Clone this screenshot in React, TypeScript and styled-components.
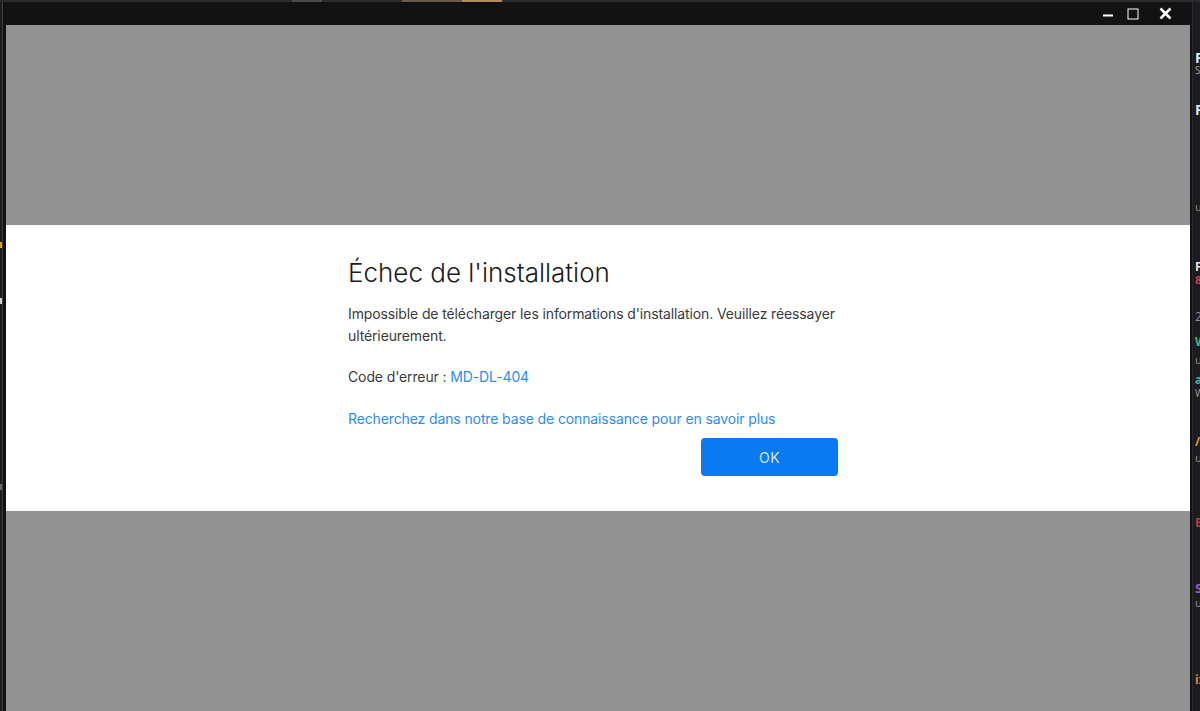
import styled, { createGlobalStyle } from "styled-components";

const GlobalStyle = createGlobalStyle`
  html, body {
    margin: 0;
    padding: 0;
    background: #1b1b1e;
    overflow: hidden;
  }
  * {
    box-sizing: border-box;
  }
`;

const Desktop = styled.div`
  width: 1200px;
  height: 711px;
  display: flex;
  flex-direction: column;
  background: #1b1b1e;
  font-family: Inter, "Noto Sans", sans-serif;
  overflow: hidden;
`;

const TopStrip = styled.div`
  height: 2px;
  flex: none;
  display: flex;
  background: #2b2b30;
`;

const StripBit = styled.div<{ $left: number; $width: number; $color: string }>`
  margin-left: ${(p) => p.$left}px;
  width: ${(p) => p.$width}px;
  background: ${(p) => p.$color};
`;

const Row = styled.div`
  flex: 1;
  display: flex;
  min-height: 0;
`;

const BehindLeft = styled.div`
  width: 2px;
  flex: none;
  display: flex;
  flex-direction: column;
  background: #1c1c1f;
`;

const Mark = styled.div<{ $top: number; $color: string; $h?: number }>`
  margin-top: ${(p) => p.$top}px;
  height: ${(p) => p.$h ?? 8}px;
  background: ${(p) => p.$color};
`;

const Window = styled.div`
  width: 1191px;
  flex: none;
  display: flex;
  flex-direction: column;
  background: #121212;
  border-left: 1px solid #3c3c40;
  border-right: 1px solid #2a2a2e;
  padding: 0 2px 0 3px;
`;

const TitleBar = styled.div`
  height: 23px;
  flex: none;
  display: flex;
  align-items: center;
  justify-content: flex-end;
  padding-right: 9px;
`;

const WinButton = styled.button<{ $width: number; $after?: number }>`
  width: ${(p) => p.$width}px;
  margin-right: ${(p) => p.$after ?? 0}px;
  height: 23px;
  border: 0;
  padding: 0;
  background: transparent;
  display: flex;
  align-items: center;
  justify-content: center;
  color: #ffffff;
`;

const Content = styled.div`
  flex: 1;
  display: flex;
  flex-direction: column;
  background: #919191;
`;

const Backdrop = styled.div`
  height: 200px;
  flex: none;
`;

const Band = styled.div`
  background: #ffffff;
  height: 286px;
  flex: none;
  padding: 30px 0 0 342px;
`;

const Column = styled.div`
  width: 490px;
  display: flex;
  flex-direction: column;
`;

const Title = styled.h1`
  margin: 0;
  font-size: 26px;
  line-height: 36px;
  font-weight: 300;
  color: #1a1a1a;
  letter-spacing: 0px;
`;

const Text = styled.p<{ $gap: number }>`
  margin: ${(p) => p.$gap}px -6px 0 0;
  font-size: 14px;
  line-height: 22px;
  color: #3a3a3a;
  letter-spacing: -0.12px;
`;

const Link = styled.a`
  color: #2c8cf4;
  text-decoration: none;
  cursor: pointer;
`;

const Actions = styled.div`
  margin-top: 8px;
  display: flex;
  justify-content: flex-end;
`;

const OkButton = styled.button`
  width: 137px;
  height: 38px;
  border: 0;
  border-radius: 4px;
  background: #0a7af3;
  color: #d4e6ff;
  font-family: Inter, "Noto Sans", sans-serif;
  font-size: 14px;
  font-weight: 400;
  letter-spacing: 0.5px;
  cursor: pointer;
`;

const BehindRight = styled.div`
  flex: 1;
  overflow: hidden;
  display: flex;
  flex-direction: column;
  padding-left: 2px;
  background: #1c1c20;
`;

const Snip = styled.div<{ $top: number; $color: string; $size?: number; $bold?: boolean }>`
  margin-top: ${(p) => p.$top}px;
  height: 12px;
  color: ${(p) => p.$color};
  font-size: ${(p) => p.$size ?? 12}px;
  font-weight: ${(p) => (p.$bold ? 700 : 400)};
  line-height: 12px;
  white-space: nowrap;
  font-family: "Noto Sans", sans-serif;
`;

const snippets = [
  { top: 50, text: "F", color: "#e8e8e8", size: 14, bold: true },
  { top: 0, text: "Se", color: "#9a9a9a", size: 10 },
  { top: 28, text: "F", color: "#e8e8e8", size: 14, bold: true },
  { top: 85, text: "u", color: "#8a8a8a", size: 11 },
  { top: 48, text: "F", color: "#e8e8e8", size: 12, bold: true },
  { top: 1, text: "8", color: "#d9364a", size: 11, bold: true },
  { top: 25, text: "2", color: "#8a8a8a", size: 12 },
  { top: 13, text: "W", color: "#21c08a", size: 12, bold: true },
  { top: 6, text: "u", color: "#8a8a8a", size: 11 },
  { top: 8, text: "a", color: "#24c0a0", size: 12, bold: true },
  { top: 1, text: "W", color: "#9a9a9a", size: 10 },
  { top: 37, text: "/\\", color: "#e89a2a", size: 12, bold: true },
  { top: 4, text: "u", color: "#8a8a8a", size: 11 },
  { top: 53, text: "E", color: "#c0392b", size: 12, bold: true },
  { top: 53, text: "S", color: "#9b59d0", size: 13, bold: true },
  { top: 3, text: "u", color: "#8a8a8a", size: 11 },
  { top: 65, text: "ix", color: "#e08a2a", size: 12, bold: true },
];

export default function App() {
  return (
    <>
      <GlobalStyle />
      <Desktop>
        <TopStrip>
          <StripBit $left={292} $width={30} $color="#4a4a50" />
          <StripBit $left={80} $width={60} $color="#6a5a4a" />
          <StripBit $left={0} $width={40} $color="#b08a60" />
        </TopStrip>
        <Row>
          <BehindLeft>
            <Mark $top={240} $color="#e0a020" $h={6} />
            <Mark $top={50} $color="#cfcfcf" $h={6} />
            <Mark $top={180} $color="#6a6a6a" $h={6} />
          </BehindLeft>
          <Window>
            <TitleBar>
              <WinButton $width={25} aria-label="Réduire">
                <svg width="12" height="12" viewBox="0 0 12 12">
                  <rect x="1" y="6.5" width="10" height="2" fill="#ffffff" />
                </svg>
              </WinButton>
              <WinButton $width={25} $after={4} aria-label="Agrandir">
                <svg width="12" height="12" viewBox="0 0 12 12">
                  <rect x="1" y="1" width="10" height="10" fill="none" stroke="#ffffff" strokeWidth="1" />
                </svg>
              </WinButton>
              <WinButton $width={32} aria-label="Fermer">
                <svg width="13" height="13" viewBox="0 0 13 13">
                  <path d="M1.5 1.5 L11.5 11.5 M11.5 1.5 L1.5 11.5" stroke="#ffffff" strokeWidth="2.6" />
                </svg>
              </WinButton>
            </TitleBar>
            <Content>
              <Backdrop />
              <Band>
                <Column>
                  <Title>Échec de l'installation</Title>
                  <Text $gap={12}>
                    Impossible de télécharger les informations d'installation. Veuillez réessayer
                    ultérieurement.
                  </Text>
                  <Text $gap={19}>
                    Code d'erreur : <Link>MD-DL-404</Link>
                  </Text>
                  <Text $gap={20}>
                    <Link>Recherchez dans notre base de connaissance pour en savoir plus</Link>
                  </Text>
                  <Actions>
                    <OkButton>OK</OkButton>
                  </Actions>
                </Column>
              </Band>
            </Content>
          </Window>
          <BehindRight>
            {snippets.map((s, i) => (
              <Snip key={i} $top={s.top} $color={s.color} $size={s.size} $bold={s.bold}>
                {s.text}
              </Snip>
            ))}
          </BehindRight>
        </Row>
      </Desktop>
    </>
  );
}
